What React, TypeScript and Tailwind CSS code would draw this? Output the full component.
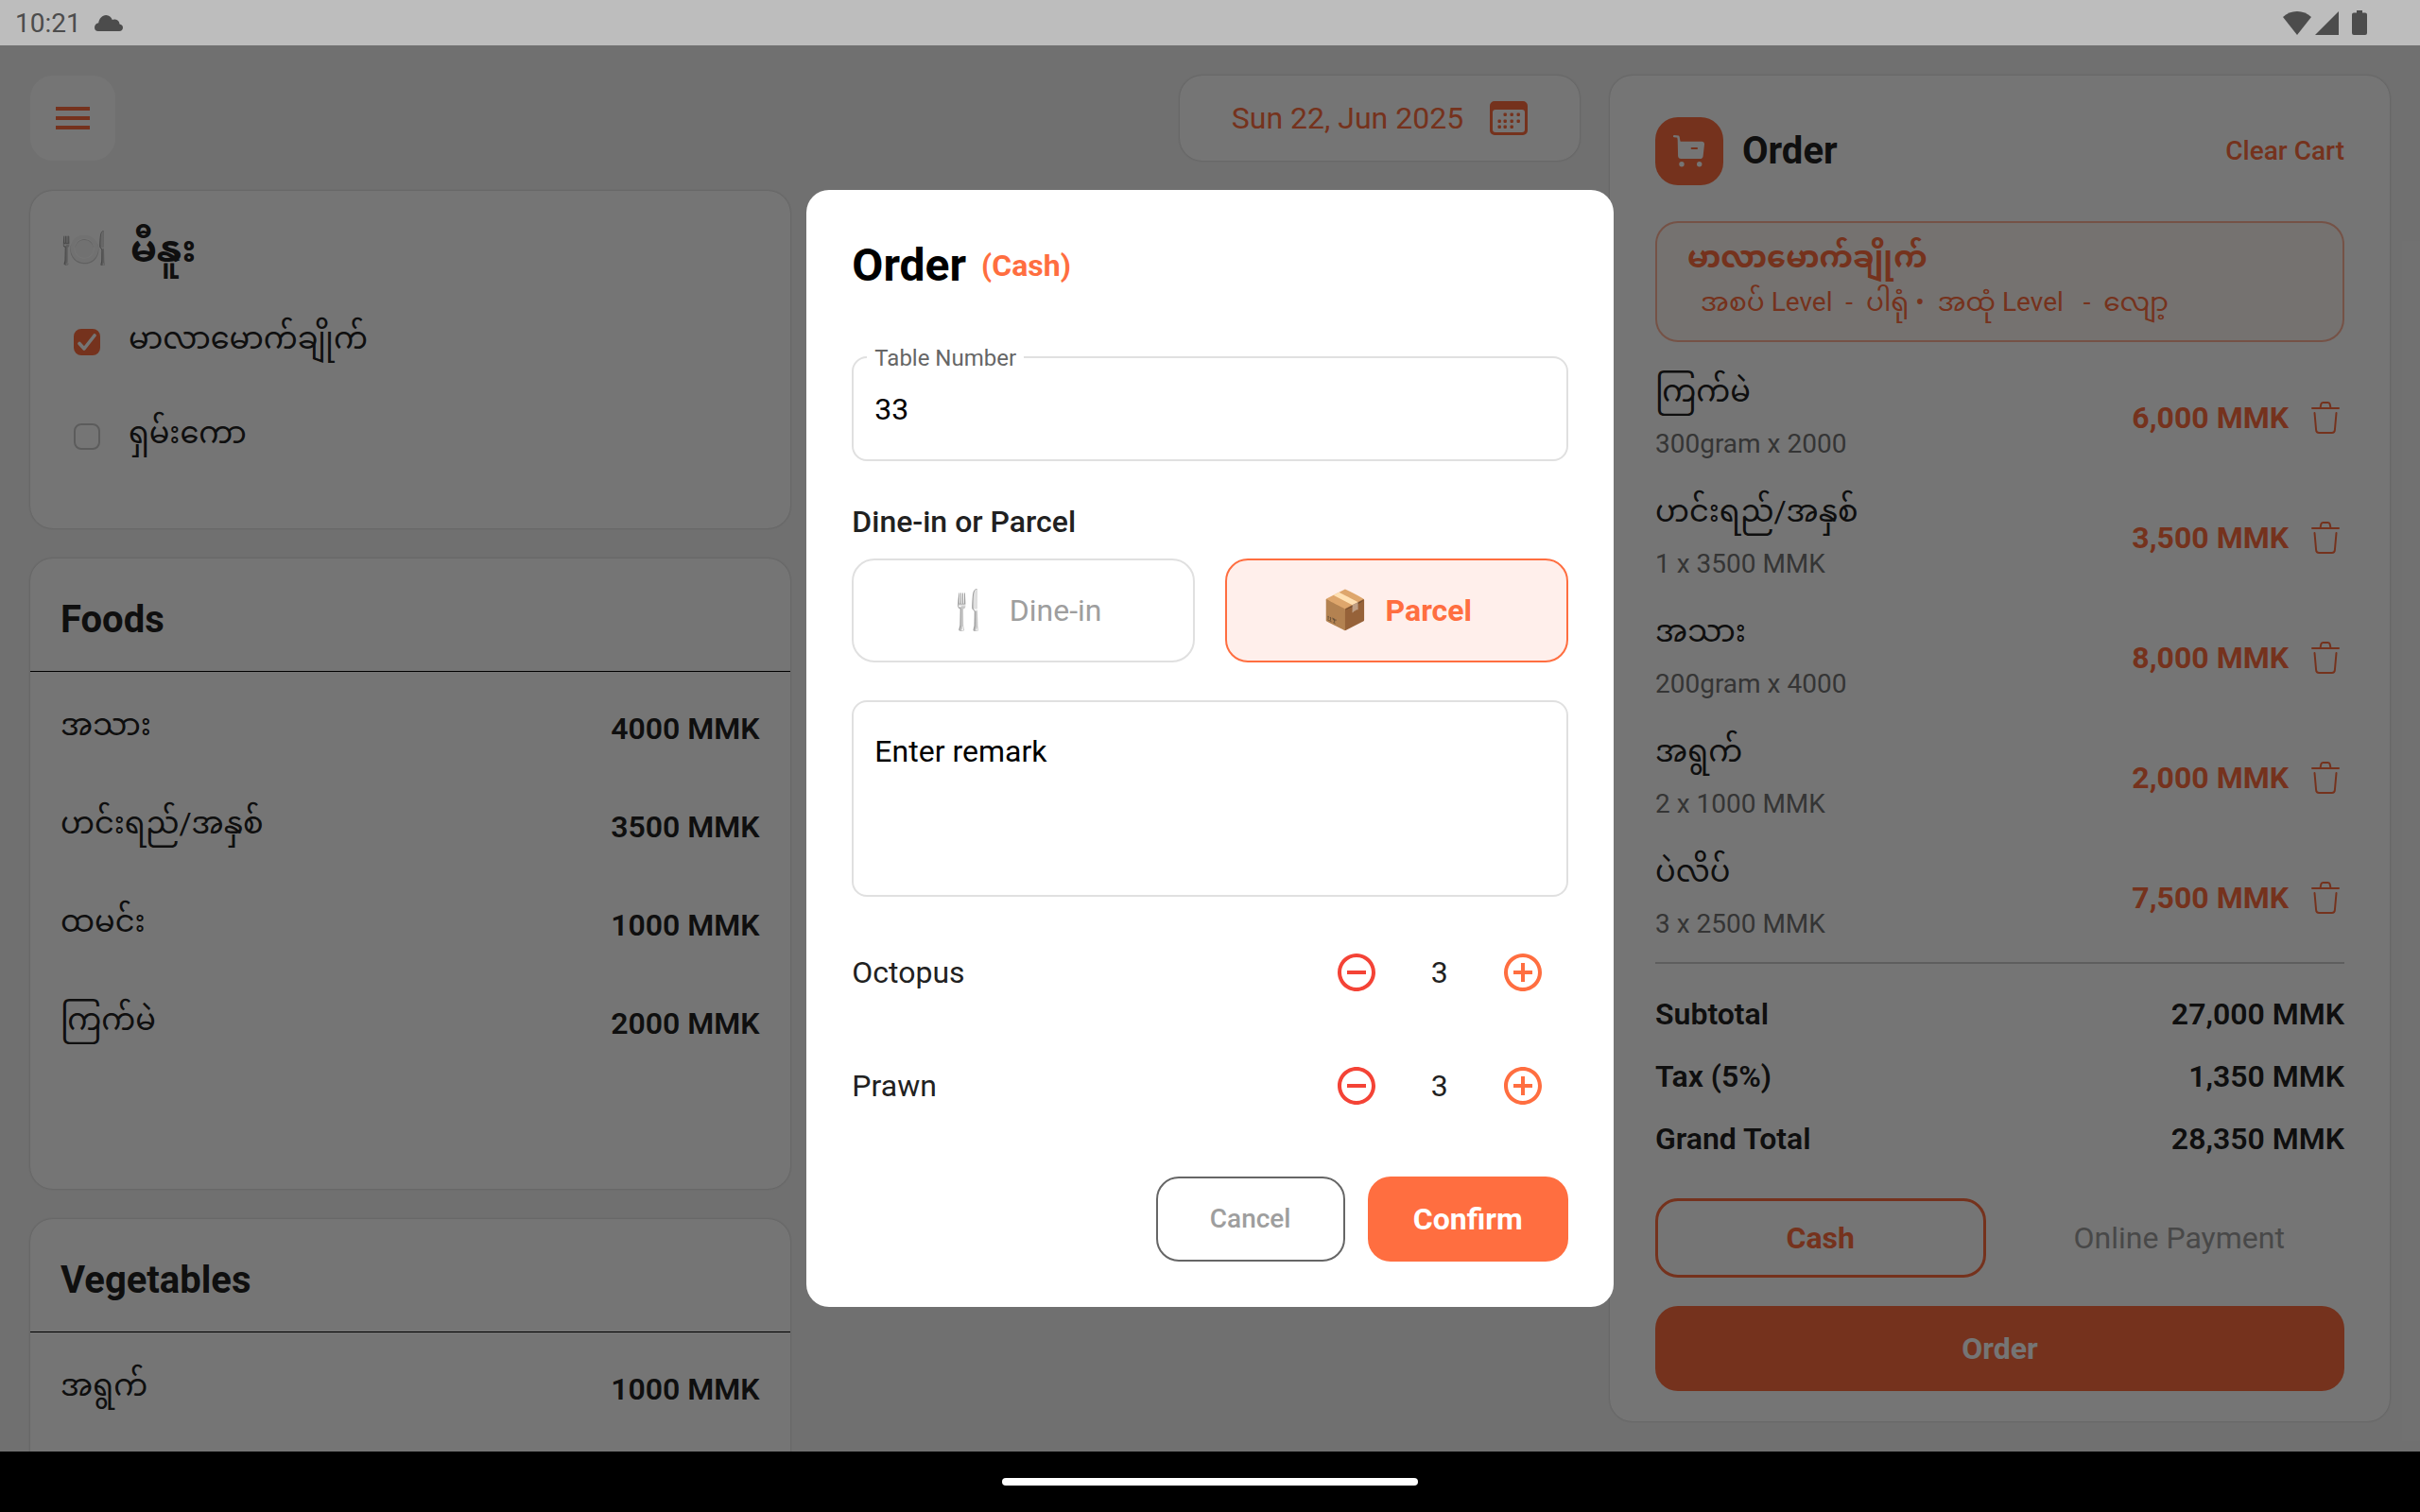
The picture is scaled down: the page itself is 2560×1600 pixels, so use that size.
import { useState } from "react";
import type { ReactNode } from "react";
import { MdAddCircleOutline, MdMenu, MdRemoveCircleOutline } from "react-icons/md";

const broths = [
  { id: "mala", name: "မာလာမောက်ချိုက်", selected: true },
  { id: "shan", name: "ရှမ်းကော", selected: false },
];

const foods = [
  { name: "အသား", price: "4000 MMK" },
  { name: "ဟင်းရည်/အနှစ်", price: "3500 MMK" },
  { name: "ထမင်း", price: "1000 MMK" },
  { name: "ကြက်မဲ", price: "2000 MMK" },
];

const vegetables = [{ name: "အရွက်", price: "1000 MMK" }];

const cart = [
  { name: "ကြက်မဲ", detail: "300gram x 2000", total: "6,000 MMK" },
  { name: "ဟင်းရည်/အနှစ်", detail: "1 x 3500 MMK", total: "3,500 MMK" },
  { name: "အသား", detail: "200gram x 4000", total: "8,000 MMK" },
  { name: "အရွက်", detail: "2 x 1000 MMK", total: "2,000 MMK" },
  { name: "ပဲလိပ်", detail: "3 x 2500 MMK", total: "7,500 MMK" },
];

const totals = [
  { label: "Subtotal", value: "27,000 MMK" },
  { label: "Tax (5%)", value: "1,350 MMK" },
  { label: "Grand Total", value: "28,350 MMK" },
];

function StatusBar() {
  return (
    <div className="flex h-12 shrink-0 items-center justify-between bg-[#bdbdbd] pr-14 pl-4 text-[#4c4c4c]">
      <div className="flex items-center gap-3.5">
        <span className="pt-0.5 text-[28px] leading-10">10:21</span>
        <svg width="30" height="17" viewBox="0 0 30 17" fill="currentColor" aria-hidden="true">
          <path d="M4 17a4 4 0 0 1-4-4c0-2.600 2-4.300 4.200-4.700C5 3.600 8 0 12.200 0c3.300 0 5.500 2.200 6.600 5 .9-.5 1.800-.7 2.900-.5 2.700.3 4.600 2.300 4.800 5C28.500 9.900 30 11.200 30 13.200 30 15.400 28.400 17 26.300 17z" />
        </svg>
      </div>
      <div className="flex items-center">
        <svg width="30" height="25" viewBox="0 0 30 25" fill="currentColor" aria-hidden="true">
          <path d="M0 6C4 2 9.300 0 15 0s11 2 15 6L15 25z" />
        </svg>
        <svg className="ml-1" width="25" height="25" viewBox="0 0 25 25" fill="currentColor" aria-hidden="true">
          <path d="M25 0v25H0z" />
        </svg>
        <svg className="ml-3.5" width="16" height="26" viewBox="0 0 16 26" fill="currentColor" aria-hidden="true">
          <path d="M5 0h6v2.500h3a2 2 0 0 1 2 2V24a2 2 0 0 1-2 2H2a2 2 0 0 1-2-2V4.500a2 2 0 0 1 2-2h3z" />
        </svg>
      </div>
    </div>
  );
}

function CalendarIcon() {
  const dots = [
    [16, 14], [23, 14], [30, 14],
    [10, 21], [16, 21], [23, 21], [30, 21],
    [10, 27], [16, 27], [23, 27],
  ];
  return (
    <svg width="40" height="36" viewBox="0 0 40 36" aria-hidden="true">
      <path
        fill="currentColor"
        fillRule="evenodd"
        d="M5 0h30a5 5 0 0 1 5 5v26a5 5 0 0 1-5 5H5a5 5 0 0 1-5-5V5a5 5 0 0 1 5-5zm1 9a3 3 0 0 0-3 3v18a3 3 0 0 0 3 3h28a3 3 0 0 0 3-3V12a3 3 0 0 0-3-3z"
      />
      {dots.map(([x, y]) => (
        <rect key={`${x}-${y}`} x={x - 1.5} y={y - 1.5} width="3.400" height="3.400" rx="1" fill="currentColor" />
      ))}
    </svg>
  );
}

function CartIcon() {
  return (
    <svg width="34" height="34" viewBox="0 0 34 34" aria-hidden="true">
      <path d="M1 1.200l4.400.5 1.500 7" fill="none" stroke="#fff" strokeWidth="2.200" strokeLinecap="round" strokeLinejoin="round" />
      <path
        d="M6 6.800h24.500a2.600 2.600 0 0 1 2.500 2.900l-1.400 12.500a3.200 3.200 0 0 1-3.200 2.800H8.300a3.200 3.200 0 0 1-3.200-3L4.600 1.200l1.800.6z"
        fill="#fff"
      />
      <path d="M19.700 14h5.300" stroke="#ff6e40" strokeWidth="2.200" strokeLinecap="round" />
      <circle cx="9" cy="30.700" r="2.700" fill="#fff" />
      <circle cx="27.700" cy="30.700" r="2.700" fill="#fff" />
    </svg>
  );
}

function TrashIcon() {
  return (
    <svg width="30" height="34" viewBox="0 0 30 34" fill="none" stroke="currentColor" strokeWidth="2" strokeLinecap="round" strokeLinejoin="round" aria-hidden="true">
      <path d="M1 7h28" />
      <path d="M9.500 7l.8-4.200A2.200 2.200 0 0 1 12.500 1h5a2.200 2.200 0 0 1 2.200 1.800l.8 4.200" />
      <path d="M3.500 12l1.600 18a3.200 3.200 0 0 0 3.200 3h13.400a3.200 3.200 0 0 0 3.200-3l1.600-18" />
    </svg>
  );
}

function Card({ className = "", children }: { className?: string; children: ReactNode }) {
  return (
    <section className={`shrink-0 rounded-3xl bg-white shadow-[0_0_3px_rgba(0,0,0,0.22)] ${className}`}>
      {children}
    </section>
  );
}

function PriceCard({
  title,
  items,
  className = "",
}: {
  title: string;
  items: { name: string; price: string }[];
  className?: string;
}) {
  return (
    <Card className={className}>
      <h2 className="border-b border-black px-8 pt-[41px] pb-[30px] text-[40px] leading-12 font-bold">{title}</h2>
      <ul className="px-8 pt-2">
        {items.map((item) => (
          <li key={item.name} className="flex h-[104px] items-center justify-between">
            <span className="pb-2 text-[32px] leading-12">{item.name}</span>
            <span className="text-[32px] leading-12 font-semibold">{item.price}</span>
          </li>
        ))}
      </ul>
    </Card>
  );
}

function OrderPanel() {
  return (
    <Card className="px-12 pt-11 pb-8">
      <div className="flex items-center">
        <span className="flex size-[72px] items-center justify-center rounded-3xl bg-[#ff6e40]">
          <CartIcon />
        </span>
        <h2 className="ml-5 text-[40px] leading-12 font-bold">Order</h2>
        <button type="button" className="ml-auto text-[28px] leading-10 font-medium text-[#ff6e40]">
          Clear Cart
        </button>
      </div>

      <div className="mt-[38px] rounded-3xl border-2 border-[#ff6e40]/50 bg-[#ff6e40]/5 px-8 pt-3 pb-4 text-[#ff6e40]">
        <p className="text-[32px] leading-12 font-bold">မာလာမောက်ချိုက်</p>
        <p className="pl-3.5 text-[28px] leading-12 whitespace-pre">
          {"အစပ် Level  -  ပါရုံ •  အထုံ Level   -  လျော့"}
        </p>
      </div>

      <ul className="mt-6 flex flex-col gap-4">
        {cart.map((item) => (
          <li key={item.name} className="flex items-center">
            <div className="flex-1">
              <p className="text-[32px] leading-14">{item.name}</p>
              <p className="text-[28px] leading-[55px] text-[#757575]">{item.detail}</p>
            </div>
            <span className="text-[32px] leading-12 font-bold text-[#ff6e40]">{item.total}</span>
            <button type="button" aria-label={`Remove ${item.name}`} className="mr-[5px] ml-6 text-[#ff6e40]">
              <TrashIcon />
            </button>
          </li>
        ))}
      </ul>

      <hr className="mt-[13px] border-t-2 border-[#cccccc]" />

      <dl className="mt-5">
        {totals.map((row) => (
          <div key={row.label} className="flex justify-between text-[32px] leading-[66px] font-semibold">
            <dt>{row.label}</dt>
            <dd>{row.value}</dd>
          </div>
        ))}
      </dl>

      <div className="mt-[30px] grid grid-cols-2 gap-[30px]">
        <button
          type="button"
          aria-pressed="true"
          className="h-[84px] rounded-3xl border-3 border-[#ff6e40] text-[32px] leading-12 font-bold text-[#ff6e40]"
        >
          Cash
        </button>
        <button type="button" aria-pressed="false" className="h-[84px] rounded-3xl text-[32px] leading-12 text-[#9e9e9e]">
          Online Payment
        </button>
      </div>

      <button type="button" className="mt-[30px] h-[90px] w-full rounded-3xl bg-[#ff6e40] text-[32px] leading-12 font-bold text-white">
        Order
      </button>
    </Card>
  );
}

function Counter({ label, initial }: { label: string; initial: number }) {
  const [count, setCount] = useState(initial);
  return (
    <div className="flex h-[120px] items-center text-[32px] leading-12">
      <span className="flex-1">{label}</span>
      <button
        type="button"
        aria-label={`Less ${label}`}
        onClick={() => setCount(Math.max(0, count - 1))}
        className="flex size-24 items-center justify-center text-[#f44336]"
      >
        <MdRemoveCircleOutline size={48} />
      </button>
      <span className="w-20 text-center">{count}</span>
      <button
        type="button"
        aria-label={`More ${label}`}
        onClick={() => setCount(count + 1)}
        className="flex size-24 items-center justify-center text-[#ff6e40]"
      >
        <MdAddCircleOutline size={48} />
      </button>
    </div>
  );
}

function OrderDialog() {
  return (
    <div role="dialog" aria-modal="true" aria-labelledby="dialog-title" className="w-1/3 rounded-3xl bg-white p-12">
      <div className="flex items-center gap-4">
        <h1 id="dialog-title" className="text-[48px] leading-16 font-bold text-black">
          Order
        </h1>
        <span className="text-[32px] leading-12 font-bold text-[#ff6e40]">(Cash)</span>
      </div>

      <div className="relative mt-16">
        <label htmlFor="table-number" className="absolute -top-3.5 left-4 bg-white px-2 text-[24px] leading-8 text-[#666666]">
          Table Number
        </label>
        <input
          id="table-number"
          type="text"
          inputMode="numeric"
          defaultValue="33"
          className="block h-[111px] w-full rounded-2xl border-2 border-[#e0e0e0] px-[22px] text-[32px] leading-12 text-black outline-none"
        />
      </div>

      <p className="mt-11 text-[32px] leading-10 font-medium">Dine-in or Parcel</p>
      <div className="mt-[19px] grid grid-cols-2 gap-8">
        <button
          type="button"
          aria-pressed="false"
          className="flex h-[110px] items-center justify-center gap-[18px] rounded-3xl border-2 border-[#e0e0e0] text-[32px] leading-12 text-[#9e9e9e]"
        >
          <span className="text-[40px]" aria-hidden="true">🍴</span>
          Dine-in
        </button>
        <button
          type="button"
          aria-pressed="true"
          className="flex h-[110px] items-center justify-center gap-[18px] rounded-3xl border-2 border-[#ff6e40] bg-[#ffefeb] text-[32px] leading-12 font-bold text-[#ff6e40]"
        >
          <span className="text-[40px] font-normal" aria-hidden="true">📦</span>
          Parcel
        </button>
      </div>

      <textarea
        aria-label="Remark"
        placeholder="Enter remark"
        className="mt-10 block h-52 w-full resize-none rounded-2xl border-2 border-[#e0e0e0] px-[22px] py-8 text-[32px] leading-10 text-black outline-none placeholder:text-black"
      />

      <div className="mt-5">
        <Counter label="Octopus" initial={3} />
        <Counter label="Prawn" initial={3} />
      </div>

      <div className="mt-9 flex justify-end gap-6">
        <button type="button" className="h-[90px] w-[200px] rounded-3xl border-2 border-[#666666] text-[28px] leading-10 font-medium text-[#9e9e9e]">
          Cancel
        </button>
        <button type="button" className="h-[90px] w-[212px] rounded-3xl bg-[#ff6e40] text-[32px] leading-12 font-bold text-white">
          Confirm
        </button>
      </div>
    </div>
  );
}

export default function App() {
  return (
    <div className="flex h-screen flex-col overflow-hidden bg-black font-['Roboto','Noto_Sans_Myanmar',sans-serif] text-[#212121]">
      <StatusBar />
      <div className="relative min-h-0 flex-1 overflow-hidden bg-[#f5f5f5]">
        <main className="grid h-full grid-cols-[1639fr_825fr] items-start gap-8 p-8">
          <div>
            <header className="flex items-center justify-between">
              <button type="button" aria-label="Menu" className="flex size-[90px] items-center justify-center rounded-3xl bg-white text-[#ff6e40]">
                <MdMenu size={48} />
              </button>
              <button
                type="button"
                className="flex h-[90px] min-w-[423px] items-center justify-center gap-7 rounded-3xl bg-white text-[32px] leading-12 text-[#ff6e40] shadow-[0_0_3px_rgba(0,0,0,0.22)]"
              >
                Sun 22, Jun 2025
                <CalendarIcon />
              </button>
            </header>

            <div className="mt-8 grid grid-cols-2 gap-8">
              <div className="flex flex-col gap-8">
                <Card className="px-8 pt-[30px] pb-[47px]">
                  <h2 className="flex items-center gap-6 text-[40px] leading-16 font-bold">
                    <span className="font-normal" aria-hidden="true">🍽️</span>
                    မီနူး
                  </h2>
                  <div className="mt-4">
                    {broths.map((broth) => (
                      <div key={broth.id} className="flex h-[100px] items-center gap-[30px] pl-3.5">
                        <span className="grid size-7 place-items-center">
                          <input
                            id={broth.id}
                            type="checkbox"
                            defaultChecked={broth.selected}
                            className="peer col-start-1 row-start-1 size-7 appearance-none rounded-lg border-2 border-[#c8c8c8] checked:border-[#ff6e40] checked:bg-[#ff6e40]"
                          />
                          <svg
                            className="pointer-events-none invisible col-start-1 row-start-1 peer-checked:visible"
                            width="20"
                            height="18"
                            viewBox="0 0 20 18"
                            fill="none"
                            stroke="#fff"
                            strokeWidth="3.600"
                            strokeLinecap="round"
                            strokeLinejoin="round"
                            aria-hidden="true"
                          >
                            <path d="M2 10.500l5 5.500L18 2" />
                          </svg>
                        </span>
                        <label htmlFor={broth.id} className="pb-2 text-[32px] leading-12">
                          {broth.name}
                        </label>
                      </div>
                    ))}
                  </div>
                </Card>
                <PriceCard title="Foods" items={foods} className="pb-[123px]" />
                <PriceCard title="Vegetables" items={vegetables} className="pb-[123px]" />
              </div>
            </div>
          </div>

          <OrderPanel />
        </main>

        <div className="absolute inset-0 flex items-center justify-center bg-black/54">
          <OrderDialog />
        </div>
      </div>
      <div className="flex h-16 shrink-0 items-center justify-center bg-black">
        <div className="h-2 w-[440px] rounded-full bg-white" />
      </div>
    </div>
  );
}
